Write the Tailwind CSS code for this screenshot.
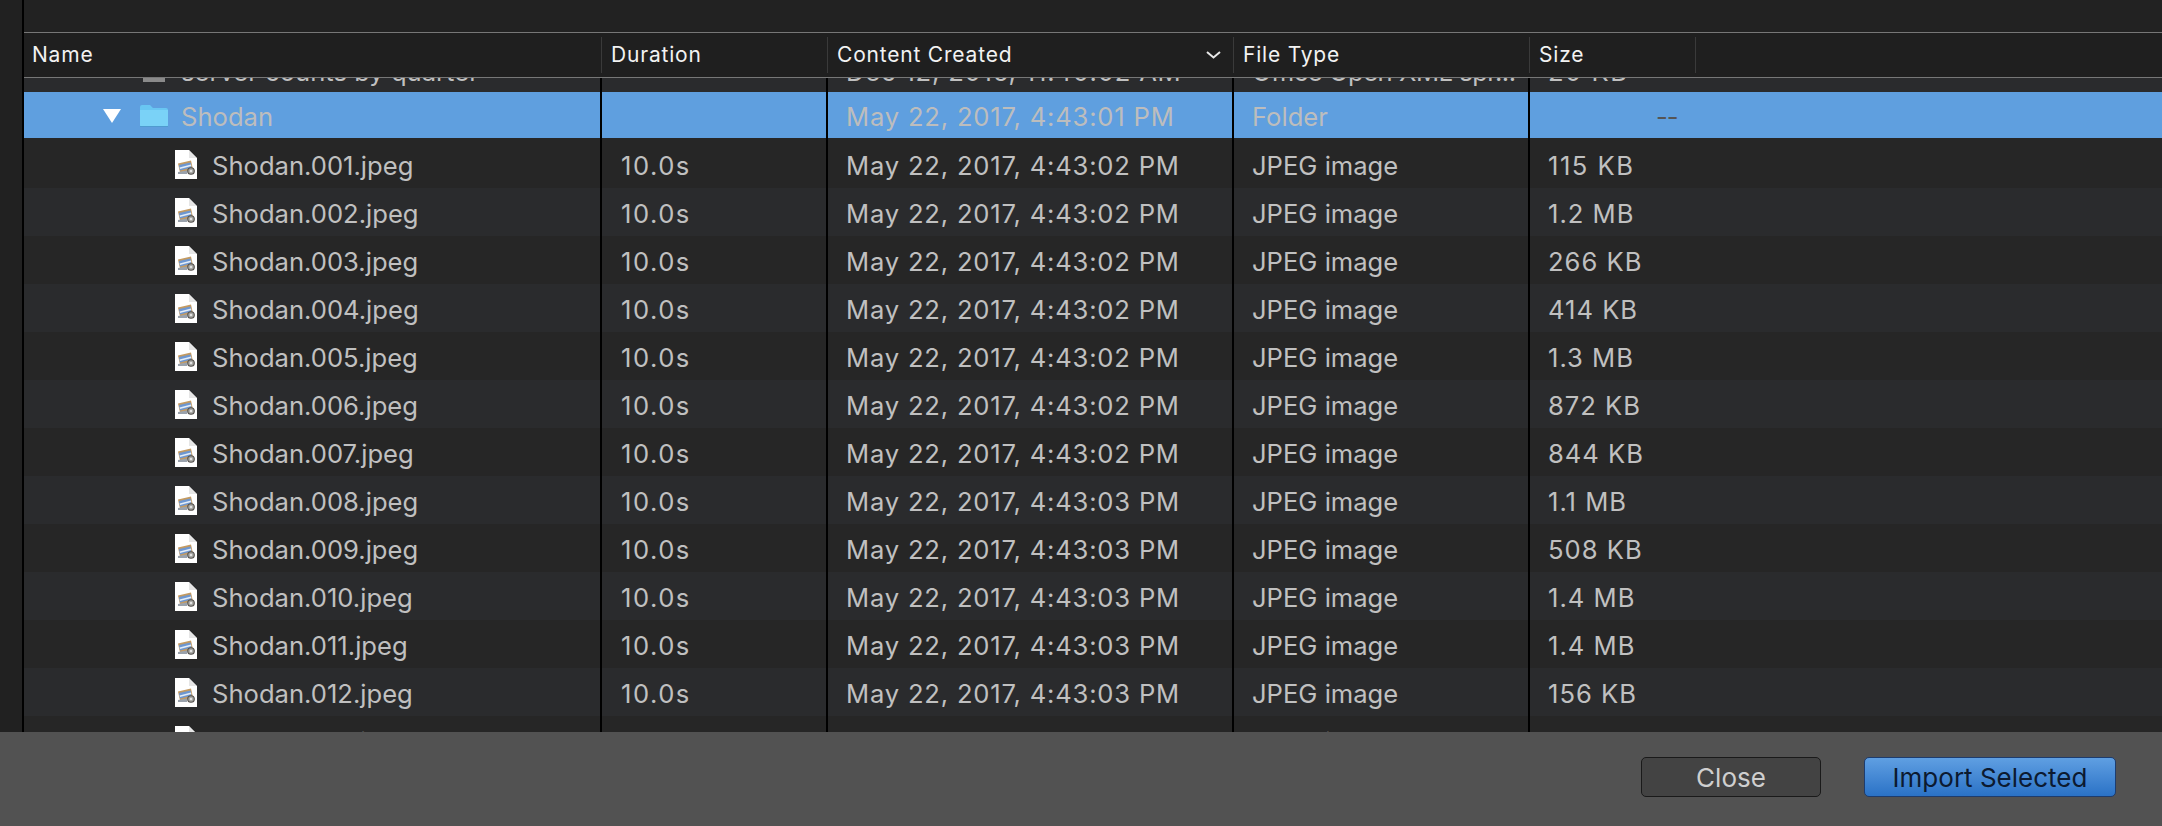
<!DOCTYPE html>
<html><head><meta charset="utf-8"><script src="https://cdn.jsdelivr.net/npm/@tailwindcss/browser@4"></script></head>
<body class="m-0">
<svg width="0" height="0" class="absolute"><defs>
<symbol id="jpg" viewBox="0 0 22 29">
<path d="M0 0h14l8 8v21H0z" fill="#fff"/><path d="M14 .5l7.500 7.500h-7.500z" fill="#e6e6e6"/>
<path d="M3 13.500l13-3 2 9-13 3z" fill="#c39a62"/><path d="M4 15l11.500-2.500 1 5L5 20.500z" fill="#6d97d2"/><path d="M4.500 17.500l11.500-3 .4 1.500-11.400 3z" fill="#e4edf7"/>
<path d="M3 22l9-1.500v3.500H3z" fill="#9aa2ac"/><circle cx="16" cy="21" r="3.300" fill="#a3a39f" stroke="#55524e" stroke-width="1.100"/><circle cx="16" cy="21" r="1.300" fill="#e2e2e2"/>
</symbol></defs></svg>
<div class="w-[2162px] h-[826px] overflow-hidden flex flex-col bg-[#222222] font-['Inter','Liberation_Sans',sans-serif]">
<div class="h-[732px] flex overflow-hidden">
<div class="w-[22px] bg-[#212121]"></div>
<div class="w-[2px] bg-black"></div>
<div class="flex-1 flex flex-col overflow-hidden">
<div class="h-[32px] bg-[#222222] shrink-0"></div>
<div class="h-[46px] shrink-0 z-10 border-y border-[#777777] bg-[#1f1f1f] flex items-center text-[21px] tracking-[0.8px] text-[#f2f2f2]">
<div class="w-[578px] h-[36px] flex items-center pl-[8px] border-r border-[#3a3a3a]">Name</div>
<div class="w-[226px] h-[36px] flex items-center pl-[9px] border-r border-[#3a3a3a]">Duration</div>
<div class="w-[406px] h-[36px] flex items-center justify-between pl-[9px] pr-[12px] border-r border-[#3a3a3a]"><span>Content Created</span>
<svg width="15" height="8" viewBox="0 0 15 8" fill="none" stroke="#e8e8e8" stroke-width="2"><path d="M1 1l6.500 5.500L14 1"/></svg></div>
<div class="w-[296px] h-[36px] flex items-center pl-[9px] border-r border-[#3a3a3a]">File Type</div>
<div class="w-[166px] h-[36px] flex items-center pl-[9px] border-r border-[#3a3a3a]">Size</div>
</div>
<div class="flex-1 overflow-hidden text-[25.6px] text-[#c0c0c0] bg-[#262626] -mt-[34px]">
<div class="h-[48px] flex bg-[#2a2b2d] whitespace-nowrap"><div class="w-[578px] border-r-2 border-black flex items-center pl-[119px] gap-[16px]"><span class="w-[22px] h-[28px] bg-[#8a8a8a]"></span><span class="pt-[8px]">server counts by quarter</span></div><div class="w-[226px] border-r-2 border-black"></div><div class="w-[406px] border-r-2 border-black flex items-center pl-[18px] pt-[8px] tracking-[0.8px]">Dec 12, 2016, 11:40:02 AM</div><div class="w-[296px] border-r-2 border-black flex items-center pl-[18px] pt-[8px] tracking-[-0.5px]">Office Open XML spr...</div><div class="flex items-center pl-[18px] pt-[8px] tracking-[1.5px]">20 KB</div></div>
<div class="h-[48px] flex whitespace-nowrap bg-[linear-gradient(#5f9fdf_46px,#262626_46px)] text-[#bdbdbd]"><div class="w-[578px] border-r-2 border-black flex items-center pl-[79px]"><svg width="18" height="14" viewBox="0 0 18 14" class="mr-[18px]"><path d="M0 0h18L9 14z" fill="#fff"/></svg><svg width="30" height="24" viewBox="0 0 30 24" class="mr-[12px]"><path d="M1 3a2 2 0 012-2h8l3 3h13a2 2 0 012 2v15a2 2 0 01-2 2H3a2 2 0 01-2-2z" fill="#69c6f2"/><path d="M1 6h28v15a2 2 0 01-2 2H3a2 2 0 01-2-2z" fill="#7ad2f7"/><path d="M1 22h28v1H1z" fill="#4f9bd0"/></svg><span class="pt-[3px]">Shodan</span></div><div class="w-[226px] border-r-2 border-black"></div><div class="w-[406px] border-r-2 border-black flex items-center pl-[18px] pt-[3px] tracking-[0.8px]">May 22, 2017, 4:43:01 PM</div><div class="w-[296px] border-r-2 border-black flex items-center pl-[18px] pt-[3px]">Folder</div><div class="flex items-center pl-[126px] pt-[3px] text-[#555555] tracking-[-1px]">--</div></div>

<div class="h-[48px] flex whitespace-nowrap"><div class="w-[578px] border-r-2 border-black flex items-center pl-[151px] gap-[15px]"><svg width="22" height="29"><use href="#jpg"/></svg><span class="pt-[5px]">Shodan.001.jpeg</span></div><div class="w-[226px] border-r-2 border-black flex items-center pl-[19px] pt-[5px] tracking-[1.5px]">10.0s</div><div class="w-[406px] border-r-2 border-black flex items-center pl-[18px] pt-[5px] tracking-[0.8px]">May 22, 2017, 4:43:02 PM</div><div class="w-[296px] border-r-2 border-black flex items-center pl-[18px] pt-[5px]">JPEG image</div><div class="flex items-center pl-[18px] pt-[5px] tracking-[1.5px]">115 KB</div></div>
<div class="h-[48px] flex whitespace-nowrap bg-[#2a2b2d]"><div class="w-[578px] border-r-2 border-black flex items-center pl-[151px] gap-[15px]"><svg width="22" height="29"><use href="#jpg"/></svg><span class="pt-[5px]">Shodan.002.jpeg</span></div><div class="w-[226px] border-r-2 border-black flex items-center pl-[19px] pt-[5px] tracking-[1.5px]">10.0s</div><div class="w-[406px] border-r-2 border-black flex items-center pl-[18px] pt-[5px] tracking-[0.8px]">May 22, 2017, 4:43:02 PM</div><div class="w-[296px] border-r-2 border-black flex items-center pl-[18px] pt-[5px]">JPEG image</div><div class="flex items-center pl-[18px] pt-[5px] tracking-[1px]">1.2 MB</div></div>
<div class="h-[48px] flex whitespace-nowrap"><div class="w-[578px] border-r-2 border-black flex items-center pl-[151px] gap-[15px]"><svg width="22" height="29"><use href="#jpg"/></svg><span class="pt-[5px]">Shodan.003.jpeg</span></div><div class="w-[226px] border-r-2 border-black flex items-center pl-[19px] pt-[5px] tracking-[1.5px]">10.0s</div><div class="w-[406px] border-r-2 border-black flex items-center pl-[18px] pt-[5px] tracking-[0.8px]">May 22, 2017, 4:43:02 PM</div><div class="w-[296px] border-r-2 border-black flex items-center pl-[18px] pt-[5px]">JPEG image</div><div class="flex items-center pl-[18px] pt-[5px] tracking-[1px]">266 KB</div></div>
<div class="h-[48px] flex whitespace-nowrap bg-[#2a2b2d]"><div class="w-[578px] border-r-2 border-black flex items-center pl-[151px] gap-[15px]"><svg width="22" height="29"><use href="#jpg"/></svg><span class="pt-[5px]">Shodan.004.jpeg</span></div><div class="w-[226px] border-r-2 border-black flex items-center pl-[19px] pt-[5px] tracking-[1.5px]">10.0s</div><div class="w-[406px] border-r-2 border-black flex items-center pl-[18px] pt-[5px] tracking-[0.8px]">May 22, 2017, 4:43:02 PM</div><div class="w-[296px] border-r-2 border-black flex items-center pl-[18px] pt-[5px]">JPEG image</div><div class="flex items-center pl-[18px] pt-[5px] tracking-[1px]">414 KB</div></div>
<div class="h-[48px] flex whitespace-nowrap"><div class="w-[578px] border-r-2 border-black flex items-center pl-[151px] gap-[15px]"><svg width="22" height="29"><use href="#jpg"/></svg><span class="pt-[5px]">Shodan.005.jpeg</span></div><div class="w-[226px] border-r-2 border-black flex items-center pl-[19px] pt-[5px] tracking-[1.5px]">10.0s</div><div class="w-[406px] border-r-2 border-black flex items-center pl-[18px] pt-[5px] tracking-[0.8px]">May 22, 2017, 4:43:02 PM</div><div class="w-[296px] border-r-2 border-black flex items-center pl-[18px] pt-[5px]">JPEG image</div><div class="flex items-center pl-[18px] pt-[5px] tracking-[1px]">1.3 MB</div></div>
<div class="h-[48px] flex whitespace-nowrap bg-[#2a2b2d]"><div class="w-[578px] border-r-2 border-black flex items-center pl-[151px] gap-[15px]"><svg width="22" height="29"><use href="#jpg"/></svg><span class="pt-[5px]">Shodan.006.jpeg</span></div><div class="w-[226px] border-r-2 border-black flex items-center pl-[19px] pt-[5px] tracking-[1.5px]">10.0s</div><div class="w-[406px] border-r-2 border-black flex items-center pl-[18px] pt-[5px] tracking-[0.8px]">May 22, 2017, 4:43:02 PM</div><div class="w-[296px] border-r-2 border-black flex items-center pl-[18px] pt-[5px]">JPEG image</div><div class="flex items-center pl-[18px] pt-[5px] tracking-[1px]">872 KB</div></div>
<div class="h-[48px] flex whitespace-nowrap"><div class="w-[578px] border-r-2 border-black flex items-center pl-[151px] gap-[15px]"><svg width="22" height="29"><use href="#jpg"/></svg><span class="pt-[5px]">Shodan.007.jpeg</span></div><div class="w-[226px] border-r-2 border-black flex items-center pl-[19px] pt-[5px] tracking-[1.5px]">10.0s</div><div class="w-[406px] border-r-2 border-black flex items-center pl-[18px] pt-[5px] tracking-[0.8px]">May 22, 2017, 4:43:02 PM</div><div class="w-[296px] border-r-2 border-black flex items-center pl-[18px] pt-[5px]">JPEG image</div><div class="flex items-center pl-[18px] pt-[5px] tracking-[1px]">844 KB</div></div>
<div class="h-[48px] flex whitespace-nowrap bg-[#2a2b2d]"><div class="w-[578px] border-r-2 border-black flex items-center pl-[151px] gap-[15px]"><svg width="22" height="29"><use href="#jpg"/></svg><span class="pt-[5px]">Shodan.008.jpeg</span></div><div class="w-[226px] border-r-2 border-black flex items-center pl-[19px] pt-[5px] tracking-[1.5px]">10.0s</div><div class="w-[406px] border-r-2 border-black flex items-center pl-[18px] pt-[5px] tracking-[0.8px]">May 22, 2017, 4:43:03 PM</div><div class="w-[296px] border-r-2 border-black flex items-center pl-[18px] pt-[5px]">JPEG image</div><div class="flex items-center pl-[18px] pt-[5px] tracking-[1px]">1.1 MB</div></div>
<div class="h-[48px] flex whitespace-nowrap"><div class="w-[578px] border-r-2 border-black flex items-center pl-[151px] gap-[15px]"><svg width="22" height="29"><use href="#jpg"/></svg><span class="pt-[5px]">Shodan.009.jpeg</span></div><div class="w-[226px] border-r-2 border-black flex items-center pl-[19px] pt-[5px] tracking-[1.5px]">10.0s</div><div class="w-[406px] border-r-2 border-black flex items-center pl-[18px] pt-[5px] tracking-[0.8px]">May 22, 2017, 4:43:03 PM</div><div class="w-[296px] border-r-2 border-black flex items-center pl-[18px] pt-[5px]">JPEG image</div><div class="flex items-center pl-[18px] pt-[5px] tracking-[1px]">508 KB</div></div>
<div class="h-[48px] flex whitespace-nowrap bg-[#2a2b2d]"><div class="w-[578px] border-r-2 border-black flex items-center pl-[151px] gap-[15px]"><svg width="22" height="29"><use href="#jpg"/></svg><span class="pt-[5px]">Shodan.010.jpeg</span></div><div class="w-[226px] border-r-2 border-black flex items-center pl-[19px] pt-[5px] tracking-[1.5px]">10.0s</div><div class="w-[406px] border-r-2 border-black flex items-center pl-[18px] pt-[5px] tracking-[0.8px]">May 22, 2017, 4:43:03 PM</div><div class="w-[296px] border-r-2 border-black flex items-center pl-[18px] pt-[5px]">JPEG image</div><div class="flex items-center pl-[18px] pt-[5px] tracking-[1px]">1.4 MB</div></div>
<div class="h-[48px] flex whitespace-nowrap"><div class="w-[578px] border-r-2 border-black flex items-center pl-[151px] gap-[15px]"><svg width="22" height="29"><use href="#jpg"/></svg><span class="pt-[5px]">Shodan.011.jpeg</span></div><div class="w-[226px] border-r-2 border-black flex items-center pl-[19px] pt-[5px] tracking-[1.5px]">10.0s</div><div class="w-[406px] border-r-2 border-black flex items-center pl-[18px] pt-[5px] tracking-[0.8px]">May 22, 2017, 4:43:03 PM</div><div class="w-[296px] border-r-2 border-black flex items-center pl-[18px] pt-[5px]">JPEG image</div><div class="flex items-center pl-[18px] pt-[5px] tracking-[1px]">1.4 MB</div></div>
<div class="h-[48px] flex whitespace-nowrap bg-[#2a2b2d]"><div class="w-[578px] border-r-2 border-black flex items-center pl-[151px] gap-[15px]"><svg width="22" height="29"><use href="#jpg"/></svg><span class="pt-[5px]">Shodan.012.jpeg</span></div><div class="w-[226px] border-r-2 border-black flex items-center pl-[19px] pt-[5px] tracking-[1.5px]">10.0s</div><div class="w-[406px] border-r-2 border-black flex items-center pl-[18px] pt-[5px] tracking-[0.8px]">May 22, 2017, 4:43:03 PM</div><div class="w-[296px] border-r-2 border-black flex items-center pl-[18px] pt-[5px]">JPEG image</div><div class="flex items-center pl-[18px] pt-[5px] tracking-[1px]">156 KB</div></div>
<div class="h-[48px] flex whitespace-nowrap"><div class="w-[578px] border-r-2 border-black flex items-center pl-[151px] gap-[15px]"><svg width="22" height="29"><use href="#jpg"/></svg><span class="pt-[5px]">Shodan.013.jpeg</span></div><div class="w-[226px] border-r-2 border-black flex items-center pl-[19px] pt-[5px] tracking-[1.5px]">10.0s</div><div class="w-[406px] border-r-2 border-black flex items-center pl-[18px] pt-[5px] tracking-[0.8px]">May 22, 2017, 4:43:03 PM</div><div class="w-[296px] border-r-2 border-black flex items-center pl-[18px] pt-[5px]">JPEG image</div><div class="flex items-center pl-[18px] pt-[5px] tracking-[1px]">1.1 MB</div></div>
</div>
</div>
</div>
<div class="h-[94px] bg-[#525252] flex items-center justify-end pr-[46px] pb-[4px] gap-[43px] text-[26px]">
<button class="w-[180px] h-[40px] rounded-[5px] border border-[#1a1a1a] bg-[#434343] text-[#cfcfcf] pb-[1px]">Close</button>
<button class="w-[252px] h-[40px] rounded-[5px] border border-[#1d3c6e] bg-gradient-to-b from-[#5f9fe2] to-[#2a72c6] text-[#0c1a30] pb-[1px]">Import Selected</button>
</div>
</div>
</body></html>
